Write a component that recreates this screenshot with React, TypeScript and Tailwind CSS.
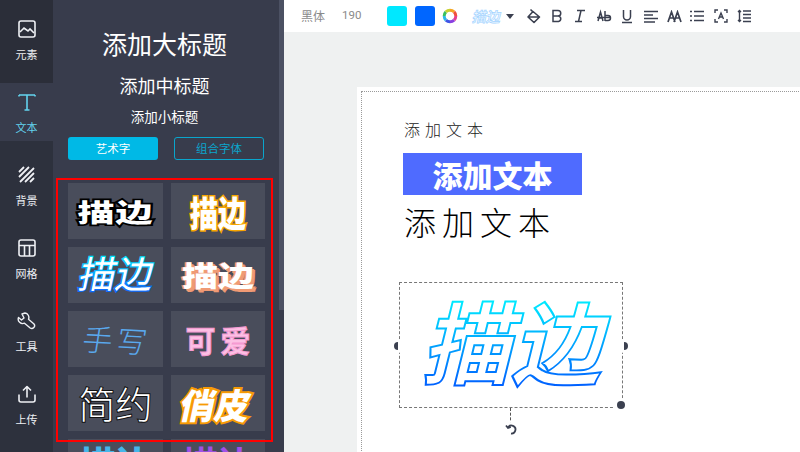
import React from "react";

const cjk = "font-['Noto_Sans_CJK_SC','Microsoft_YaHei',sans-serif]";

function Rail({ label, icon, pt, h, active }: { label: string; icon: React.ReactNode; pt: string; h: string; active?: boolean }) {
  return (
    <div className={`flex flex-col items-center ${pt} ${h} ${active ? "bg-[#383c4c] text-[#63d3ee]" : "text-[#eef0f4]"}`}>
      <div className="h-6 w-6 flex items-center justify-center">{icon}</div>
      <div className="mt-[5px] h-4 text-[11px] leading-4">{label}</div>
    </div>
  );
}

function Card({ children }: { children?: React.ReactNode }) {
  return <div className="h-14 bg-[#494d5b] flex items-center justify-center overflow-hidden">{children}</div>;
}

function ToolIcon({ children }: { children: React.ReactNode }) {
  return <div className="w-[23.4px] h-4 flex items-center justify-center text-[#3b4050]">{children}</div>;
}

export default function App() {
  return (
    <div className={`w-[800px] h-[452px] flex overflow-hidden bg-[#eff1f1] ${cjk}`}>
      {/* icon rail */}
      <div className="w-[53px] shrink-0 bg-[#2d313d] flex flex-col">
        <Rail
          label="元素"
          pt="pt-[17px]"
          h="h-[83px] bg-[#2b2e39]"
          icon={
            <svg width="18" height="18" viewBox="0 0 18 18" fill="none" stroke="currentColor" strokeWidth="1.6">
              <rect x="1" y="1" width="16" height="16" rx="2" />
              <path d="M2 12l4-4 4 3 2-2 4 4" />
            </svg>
          }
        />
        <Rail
          label="文本"
          active
          pt="pt-[7px]"
          h="h-[58px]"
          icon={
            <svg width="18" height="18" viewBox="0 0 18 18" fill="none" stroke="currentColor" strokeWidth="1.6">
              <path d="M1 2h16M1 2v1.500M17 2v1.500M9 2v15M6.500 17h5" />
            </svg>
          }
        />
        <Rail
          label="背景"
          pt="pt-[22px]"
          h="h-[73px]"
          icon={
            <svg width="18" height="18" viewBox="0 0 18 18" fill="none" stroke="currentColor" strokeWidth="1.800">
              <path d="M1 6l5-5M1 11L11 1M2 16L16 2M7 16l9-9M12 16l4-4" />
            </svg>
          }
        />
        <Rail
          label="网格"
          pt="pt-[22px]"
          h="h-[73px]"
          icon={
            <svg width="18" height="18" viewBox="0 0 18 18" fill="none" stroke="currentColor" strokeWidth="1.6">
              <rect x="1" y="1" width="16" height="16" rx="2" />
              <path d="M1 6.500h16M6.500 6.500V17M11.500 6.500V17" />
            </svg>
          }
        />
        <Rail
          label="工具"
          pt="pt-[22px]"
          h="h-[73px]"
          icon={
            <svg width="19" height="19" viewBox="0 0 19 19" fill="none" stroke="currentColor" strokeWidth="1.400" strokeLinejoin="round">
              <path d="M8 1a4.500 4.500 0 0 1 3.500 6.200l5.500 4.800a2.800 2.800 0 0 1-3.800 4L7.500 11.200A4.500 4.500 0 0 1 1.500 5.500l3 2.500L7 6 5 2z" />
            </svg>
          }
        />
        <Rail
          label="上传"
          pt="pt-[22px]"
          h="h-[73px]"
          icon={
            <svg width="18" height="18" viewBox="0 0 18 18" fill="none" stroke="currentColor" strokeWidth="1.600" strokeLinejoin="round">
              <path d="M1 9.500V15a2 2 0 0 0 2 2h12a2 2 0 0 0 2-2V9.500M9 12.500V1.500M5 5.500l4-4 4 4" />
            </svg>
          }
        />
      </div>

      {/* panel */}
      <div className="w-[231px] shrink-0 bg-[#383c4c] relative overflow-hidden text-white">
        <div className="absolute right-0 top-0 w-[5px] h-[310px] bg-[#4c5163]" />
        <div className="w-[226px] pl-[15px] pr-[15px]">
          <div className="pt-[26px] text-center text-[25px] leading-[34px] ml-[-3px]">添加大标题</div>
          <div className="mt-[13px] text-center text-[18px] leading-[25px] ml-[-3px]">添加中标题</div>
          <div className="mt-[9px] text-center text-[13.5px] leading-[18px] ml-[-3px]">添加小标题</div>
          <div className="mt-[12px] flex gap-4 text-[11.500px]">
            <div className="w-[90px] h-[23px] rounded-[3px] bg-[#00b9e6] flex items-center justify-center">艺术字</div>
            <div className="w-[90px] h-[23px] rounded-[3px] border border-[#0aa5cc] text-[#0aa5cc] flex items-center justify-center">组合字体</div>
          </div>
          <div className="mt-[22px] pt-px grid grid-cols-[95px_94px] gap-2">
            <Card>
              <span className="text-[37px] font-black text-white scale-y-[0.68] tracking-[1px] [-webkit-text-stroke:5px_#000] [paint-order:stroke_fill] leading-none">描边</span>
            </Card>
            <Card>
              <span className="text-[35px] font-black text-white scale-x-[0.8] [-webkit-text-stroke:3px_#f7a600] [paint-order:stroke_fill] leading-none">描边</span>
            </Card>
            <Card>
              <svg width="95" height="56" viewBox="0 0 95 56">
                <defs>
                  <linearGradient id="cardGrad" gradientUnits="userSpaceOnUse" x1="0" y1="-32" x2="0" y2="2">
                    <stop offset="0" stopColor="#00e5ff" />
                    <stop offset="1" stopColor="#0a6cff" />
                  </linearGradient>
                </defs>
                <text
                  x="0"
                  y="0"
                  transform="translate(9 41) skewX(-12)"
                  fontSize="37"
                  fill="#ffffff"
                  stroke="url(#cardGrad)"
                  strokeWidth="2.500"
                  paintOrder="stroke"
                  fontFamily="'Noto Sans CJK SC', sans-serif"
                >
                  描边
                </text>
              </svg>
            </Card>
            <Card>
              <span className="text-[36px] font-black text-white scale-y-[0.78] [text-shadow:2px_2px_0_#f09a74,-2px_0_0_#f09a74,3px_3px_0_#f09a74,0_-1px_0_#f09a74] leading-none">描边</span>
            </Card>
            <Card>
              <span className="text-[30px] font-light text-[#5aa9ee] tracking-[4px] ml-[2px] leading-none -skew-x-6 rotate-3">手写</span>
            </Card>
            <Card>
              <span className="text-[30px] font-bold text-[#fcc0e4] tracking-[5px] ml-[5px] [-webkit-text-stroke:1px_#f69ad2] leading-none">可爱</span>
            </Card>
            <Card>
              <span className="text-[37px] font-light text-white [-webkit-text-stroke:2px_#111] [paint-order:stroke_fill] leading-none">简约</span>
            </Card>
            <Card>
              <span className="text-[35px] font-black text-white -skew-x-12 [-webkit-text-stroke:4px_#f79a05] [paint-order:stroke_fill] leading-none mr-[3px]">俏皮</span>
            </Card>
            <Card>
              <span className="text-[36px] font-black text-[#45b6ea] leading-none mt-[5px] self-start">描边</span>
            </Card>
            <Card>
              <span className="text-[36px] font-bold text-[#a050e8] leading-none mt-[5px] self-start">描边</span>
            </Card>
          </div>
        </div>
        <div className="absolute left-[3px] top-[178px] w-[217px] h-[264px] border-2 border-[#ff0000]" />
      </div>

      {/* right side */}
      <div className="flex-1 min-w-0 flex flex-col">
        <div className="h-8 bg-white shrink-0 flex items-center pl-[17px] text-[12px] text-[#8a8a8a]">
          <span className="w-[41px]">黑体</span>
          <span className="w-[45px] text-[11.500px] font-['Roboto',sans-serif]">190</span>
          <div className="w-5 h-5 rounded-[3px] bg-[#00e8ff]" />
          <div className="w-5 h-5 rounded-[3px] bg-[#0066ff] ml-[8px]" />
          <svg width="16" height="16" viewBox="0 0 16 16" className="ml-[7px]" fill="none" strokeWidth="3">
            <path d="M8 2.200A5.800 5.800 0 0 1 12.100 3.900" stroke="#f5a623" />
            <path d="M12.100 3.900A5.800 5.800 0 0 1 13.800 8" stroke="#f0503c" />
            <path d="M13.800 8A5.800 5.800 0 0 1 12.100 12.100" stroke="#e53f8e" />
            <path d="M12.100 12.100A5.800 5.800 0 0 1 8 13.800" stroke="#8a3fe0" />
            <path d="M8 13.800A5.800 5.800 0 0 1 3.900 12.100" stroke="#3f55e5" />
            <path d="M3.900 12.100A5.800 5.800 0 0 1 2.200 8" stroke="#2fb8e8" />
            <path d="M2.200 8A5.800 5.800 0 0 1 3.900 3.900" stroke="#38c060" />
            <path d="M3.900 3.900A5.800 5.800 0 0 1 8 2.200" stroke="#c8d030" />
          </svg>
          <span className="ml-[15px] w-[29px] text-[14px] font-bold text-[#eaf6ff] -skew-x-12 [-webkit-text-stroke:0.7px_#a5d4ff] leading-none">描边</span>
          <div className="ml-[4px] w-0 h-0 border-x-[4px] border-x-transparent border-t-[5px] border-t-[#3b4050]" />
          <div className="ml-[8px] flex items-center">
            <ToolIcon>
              <svg width="16" height="16" viewBox="0 0 16 16" fill="none" stroke="currentColor" strokeWidth="1.600" strokeLinejoin="round">
                <path d="M7 3.500L13.500 9 8 14.500 2 9zM4.500 1.500l3 3M2 9h11" />
              </svg>
            </ToolIcon>
            <ToolIcon>
              <svg width="12" height="14" viewBox="0 0 12 14" fill="none" stroke="currentColor" strokeWidth="1.500">
                <path d="M2 1.500h5a2.700 2.700 0 0 1 0 5.500H2zM2 7h5.500a2.800 2.800 0 0 1 0 5.500H2z" />
              </svg>
            </ToolIcon>
            <ToolIcon>
              <svg width="12" height="14" viewBox="0 0 12 14" fill="none" stroke="currentColor" strokeWidth="1.500">
                <path d="M3 1.500h8M1 12.500h7M7 1.500L4.500 12.500" />
              </svg>
            </ToolIcon>
            <ToolIcon>
              <svg width="16" height="14" viewBox="0 0 16 14" fill="none" stroke="currentColor" strokeWidth="1.500">
                <path d="M1 8.500h14M2 12l2.500-9L7 12M3 9h3M9 2v10M9 6.500h3a2.500 2.500 0 0 1 0 5H9" />
              </svg>
            </ToolIcon>
            <ToolIcon>
              <svg width="12" height="15" viewBox="0 0 12 15" fill="none" stroke="currentColor" strokeWidth="1.500">
                <path d="M2.500 1v6.500a3.500 3.500 0 0 0 7 0V1M1 13.500h10" />
              </svg>
            </ToolIcon>
            <ToolIcon>
              <svg width="14" height="13" viewBox="0 0 14 13" fill="none" stroke="currentColor" strokeWidth="1.500">
                <path d="M0 1.500h14M0 5h9M0 8.500h14M0 12h11" />
              </svg>
            </ToolIcon>
            <ToolIcon>
              <svg width="15" height="13" viewBox="0 0 15 13" fill="none" stroke="currentColor" strokeWidth="1.700">
                <path d="M1 12l3.500-10L8 12M7 12l3.500-10L14 12M2.500 8h4M8.500 8h4" />
              </svg>
            </ToolIcon>
            <ToolIcon>
              <svg width="14" height="12" viewBox="0 0 14 12" fill="none" stroke="currentColor" strokeWidth="1.500">
                <path d="M0 1.500h2M4 1.500h10M0 6h2M4 6h10M0 10.500h2M4 10.500h10" />
              </svg>
            </ToolIcon>
            <ToolIcon>
              <svg width="14" height="14" viewBox="0 0 14 14" fill="none" stroke="currentColor" strokeWidth="1.400">
                <path d="M1 4V1h3M10 1h3v3M13 10v3h-3M4 13H1v-3M4.500 10L7 4l2.500 6M5.500 8h3" />
              </svg>
            </ToolIcon>
            <ToolIcon>
              <svg width="14" height="14" viewBox="0 0 14 14" fill="none" stroke="currentColor" strokeWidth="1.400">
                <path d="M6 2h8M6 5.500h8M6 9h8M6 12.500h8M2.500 1.500v11M1 3l1.500-1.500L4 3M1 11l1.500 1.500L4 11" />
              </svg>
            </ToolIcon>
          </div>
        </div>

        {/* canvas */}
        <div className="flex-1 relative overflow-hidden">
          <div className="absolute left-[73px] top-[55px] w-[460px] h-[400px] bg-white">
            <div className="absolute left-1 top-1 w-[500px] h-[400px] border-l border-t border-dotted border-[#9a9a9a]" />
          </div>

          <div className="absolute left-[120px] top-[85px] text-[16px] leading-6 tracking-[5px] font-light text-[#222]">添加文本</div>
          <div className="absolute left-[119px] top-[121px] w-[179px] h-[42px] bg-[#4f6bff] flex items-center justify-center text-[30px] font-black text-white leading-none">添加文本</div>
          <div className="absolute left-[120px] top-[167px] text-[32px] leading-[44px] tracking-[6px] font-light text-black">添加文本</div>

          {/* selected text */}
          <div className="absolute left-[115px] top-[250px] w-[224px] h-[126px] border border-dashed border-[#777]">
            <svg width="222" height="124" viewBox="0 0 222 124" className="absolute left-0 top-0">
              <defs>
                <linearGradient id="mainGrad" gradientUnits="userSpaceOnUse" x1="0" y1="-75" x2="0" y2="8">
                  <stop offset="0" stopColor="#00e8ff" />
                  <stop offset="1" stopColor="#0060ff" />
                </linearGradient>
              </defs>
              <text
                x="0"
                y="0"
                transform="translate(21 95) skewX(-14)"
                fontSize="90"
                fontWeight="700"
                fill="#ffffff"
                stroke="url(#mainGrad)"
                strokeWidth="2"
                fontFamily="'Noto Sans CJK SC', sans-serif"
              >
                描边
              </text>
            </svg>
          </div>
          <div className="absolute left-[107px] top-[307px] w-[14px] h-[14px] rounded-full bg-white flex items-center">
            <div className="ml-[3px] w-1 h-2 rounded-l-full bg-[#3b4050]" />
          </div>
          <div className="absolute left-[333px] top-[307px] w-[14px] h-[14px] rounded-full bg-white flex items-center">
            <div className="ml-[7px] w-1 h-2 rounded-r-full bg-[#3b4050]" />
          </div>
          <div className="absolute left-[330px] top-[366px] w-[14px] h-[14px] rounded-full bg-white flex items-center justify-center">
            <div className="w-2 h-2 rounded-full bg-[#3b4050]" />
          </div>
          <div className="absolute left-[226px] top-[376px] h-[17px] border-l border-dashed border-[#555]" />
          <div className="absolute left-[220px] top-[390px] w-[14px] h-[14px] rounded-full bg-white flex items-center justify-center text-[#3b4050]">
            <svg width="12" height="12" viewBox="0 0 12 12" fill="none" stroke="currentColor" strokeWidth="1.800">
              <path d="M3 4.500A4 4 0 1 1 6 10.500M1 2.500L3 5l2.800-1" />
            </svg>
          </div>
        </div>
      </div>
    </div>
  );
}
